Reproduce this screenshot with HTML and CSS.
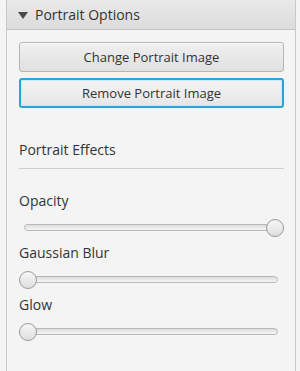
FILE: index.html
```html
<!DOCTYPE html>
<html lang="en">
<head>
    <meta charset="UTF-8">
    <title>Portrait Options</title>
    <link rel="stylesheet" href="styles.css">
</head>
<body>
    <div class="pane">
        <div class="pane-title">
            <span class="arrow"></span>
            <span>Portrait Options</span>
        </div>
        <div class="pane-body">
            <button type="button" class="btn">Change Portrait Image</button>
            <button type="button" class="btn btn-focus">Remove Portrait Image</button>

            <div class="section-title">Portrait Effects</div>
            <div class="sep"></div>

            <div class="field">
                <div class="field-label">Opacity</div>
                <div class="slider">
                    <div class="track"></div>
                    <div class="thumb" style="left: 100%;"></div>
                </div>
            </div>

            <div class="field">
                <div class="field-label">Gaussian Blur</div>
                <div class="slider">
                    <div class="track"></div>
                    <div class="thumb" style="left: 0%;"></div>
                </div>
            </div>

            <div class="field">
                <div class="field-label">Glow</div>
                <div class="slider">
                    <div class="track"></div>
                    <div class="thumb" style="left: 0%;"></div>
                </div>
            </div>
        </div>
    </div>
</body>
</html>
```

FILE: styles.css
```css
body {
    margin: 0;
    padding: 0;
    background-color: #f4f4f4;
    font-family: 'Open Sans', 'Noto Sans', sans-serif;
    color: #333;
    overflow: hidden;
}
.pane {
    margin-left: 6px;
    width: 290px;
    height: 371px;
    box-sizing: border-box;
    border-left: 1px solid #c8c8c8;
    border-right: 1px solid #c8c8c8;
}
.pane-title {
    height: 30px;
    box-sizing: border-box;
    display: flex;
    align-items: center;
    padding-left: 11px;
    gap: 7px;
    font-size: 14px;
    background: linear-gradient(#e9e9e9, #dcdcdc);
    border-bottom: 1px solid #c4c4c4;
}
.arrow {
    width: 0;
    height: 0;
    border-left: 5.5px solid transparent;
    border-right: 5.5px solid transparent;
    border-top: 7px solid #4a4a4a;
    margin-top: 1px;
}
.pane-body {
    padding: 12px 11px 0 12px;
    display: flex;
    flex-direction: column;
}
.btn {
    height: 30px;
    width: 100%;
    font-family: inherit;
    font-size: 13px;
    color: #333;
    border: 1px solid #b5b5b5;
    border-radius: 3px;
    background: linear-gradient(#f0f0f0, #e0e0e0);
    box-shadow: inset 0 1px 0 #fafafa;
    padding: 0;
}
.btn + .btn {
    margin-top: 6px;
}
.btn-focus {
    border: 2px solid #2aa5d8;
    box-shadow: inset 0 0 0 1px #c9e9f6;
    background: linear-gradient(#f4f4f4, #e6e6e6);
}
.section-title {
    margin-top: 32px;
    font-size: 14px;
    line-height: 20px;
}
.sep {
    margin-top: 8px;
    height: 1px;
    background-color: #cfcfcf;
}
.sep + .field {
    margin-top: 22px;
}
.field-label {
    font-size: 14px;
    line-height: 20px;
}
.slider {
    position: relative;
    height: 32px;
    margin: 0 9px;
}
.track {
    position: absolute;
    left: -4px;
    right: -3px;
    top: 13px;
    height: 7px;
    box-sizing: border-box;
    border: 1px solid #b8b8b8;
    border-radius: 4px;
    background: linear-gradient(#dcdcdc, #f6f6f6);
}
.thumb {
    position: absolute;
    top: 8px;
    width: 18px;
    height: 18px;
    margin-left: -9px;
    box-sizing: border-box;
    border: 1px solid #9a9a9a;
    border-radius: 50%;
    background: linear-gradient(#f6f6f6, #dedede);
}
```
